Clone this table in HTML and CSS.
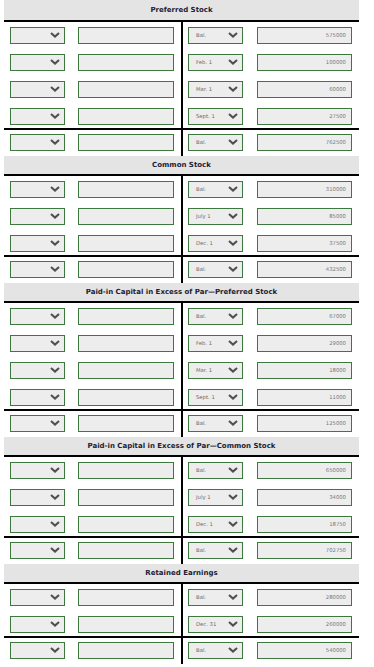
FILE: index.html
```html
<!DOCTYPE html>
<html lang="en">
<head>
    <meta charset="UTF-8">
    <meta name="viewport" content="width=device-width, initial-scale=1.0">
    <title>Stockholders' Equity T-Accounts</title>
    <link rel="stylesheet" href="styles.css">
</head>
<body>
    <div id="ledger" class="ledger"></div>

    <script>
        // Credit side of each account: [date, amount]; total is the closing balance
        const accounts = [
            { title: 'Preferred Stock', entries: [['Bal.', '575000'], ['Feb. 1', '100000'], ['Mar. 1', '60000'], ['Sept. 1', '27500']], total: '762500' },
            { title: 'Common Stock', entries: [['Bal.', '310000'], ['July 1', '85000'], ['Dec. 1', '37500']], total: '432500' },
            { title: 'Paid-in Capital in Excess of Par\u2014Preferred Stock', entries: [['Bal.', '67000'], ['Feb. 1', '29000'], ['Mar. 1', '18000'], ['Sept. 1', '11000']], total: '125000' },
            { title: 'Paid-in Capital in Excess of Par\u2014Common Stock', entries: [['Bal.', '650000'], ['July 1', '34000'], ['Dec. 1', '18750']], total: '702750' },
            { title: 'Retained Earnings', entries: [['Bal.', '280000'], ['Dec. 31', '260000']], total: '540000' }
        ];

        const chevron = '<svg class="chevron" viewBox="0 0 10 6"><polyline points="1,1 5,4.6 9,1" /></svg>';

        function pick(label) {
            return `<div class="pick"><span class="pick-label">${label}</span>${chevron}</div>`;
        }

        function row(label, amount, extra) {
            return `<div class="row ${extra}">
                <div class="cell dr">${pick('')}<div class="amount"></div></div>
                <div class="cell cr">${pick(label)}<div class="amount">${amount}</div></div>
            </div>`;
        }

        let html = '';
        accounts.forEach(acc => {
            html += `<section class="account"><div class="account-head">${acc.title}</div>`;
            acc.entries.forEach((e, i) => {
                html += row(e[0], e[1], i === acc.entries.length - 1 ? 'last' : '');
            });
            html += row('Bal.', acc.total, 'total');
            html += '</section>';
        });
        document.getElementById('ledger').innerHTML = html;
    </script>
</body>
</html>
```

FILE: styles.css
```css
body {
    margin: 0;
    padding: 0 0 0 4px;
    background-color: #ffffff;
    font-family: "DejaVu Sans", Verdana, sans-serif;
}

.ledger {
    width: 355px;
}

.account-head {
    height: 18px;
    line-height: 18px;
    background-color: #e4e4e4;
    border-bottom: 2px solid #000;
    text-align: center;
    font-weight: bold;
    font-size: 7px;
    color: #1c1c36;
}

.account:first-child .account-head {
    height: 20px;
    line-height: 21px;
}

.row {
    display: grid;
    grid-template-columns: 177px 1fr;
}

.cell {
    display: flex;
    align-items: center;
    gap: 13px;
    padding: 5px 0 5px 6px;
}

.cell.cr {
    border-left: 2px solid #000;
    padding-left: 5px;
    gap: 14px;
}

.row.last .cell {
    padding-bottom: 3px;
}

.row.total {
    border-top: 2px solid #000;
}

.row.total .cell {
    padding-top: 4px;
}

/* dropdowns */
.pick {
    display: flex;
    align-items: center;
    justify-content: space-between;
    width: 55px;
    height: 17px;
    box-sizing: border-box;
    border: 1px solid #3f783f;
    background-color: #ededed;
    padding: 0 4px 0 7px;
    flex: none;
}

.pick-label {
    font-size: 5.3px;
    line-height: 15px;
    color: #6a6a6a;
    white-space: nowrap;
}

.chevron {
    width: 10px;
    height: 6px;
    margin-top: -1px;
    flex: none;
}

.chevron polyline {
    fill: none;
    stroke: #505050;
    stroke-width: 2.1;
}

/* amount boxes */
.amount {
    width: 96px;
    height: 17px;
    box-sizing: border-box;
    border: 1px solid #3f783f;
    background-color: #ededed;
    padding: 0 5px 0 0;
    text-align: right;
    font-size: 5.3px;
    line-height: 15px;
    color: #777;
    flex: none;
}

.cell.cr .amount {
    width: 95px;
}
```
